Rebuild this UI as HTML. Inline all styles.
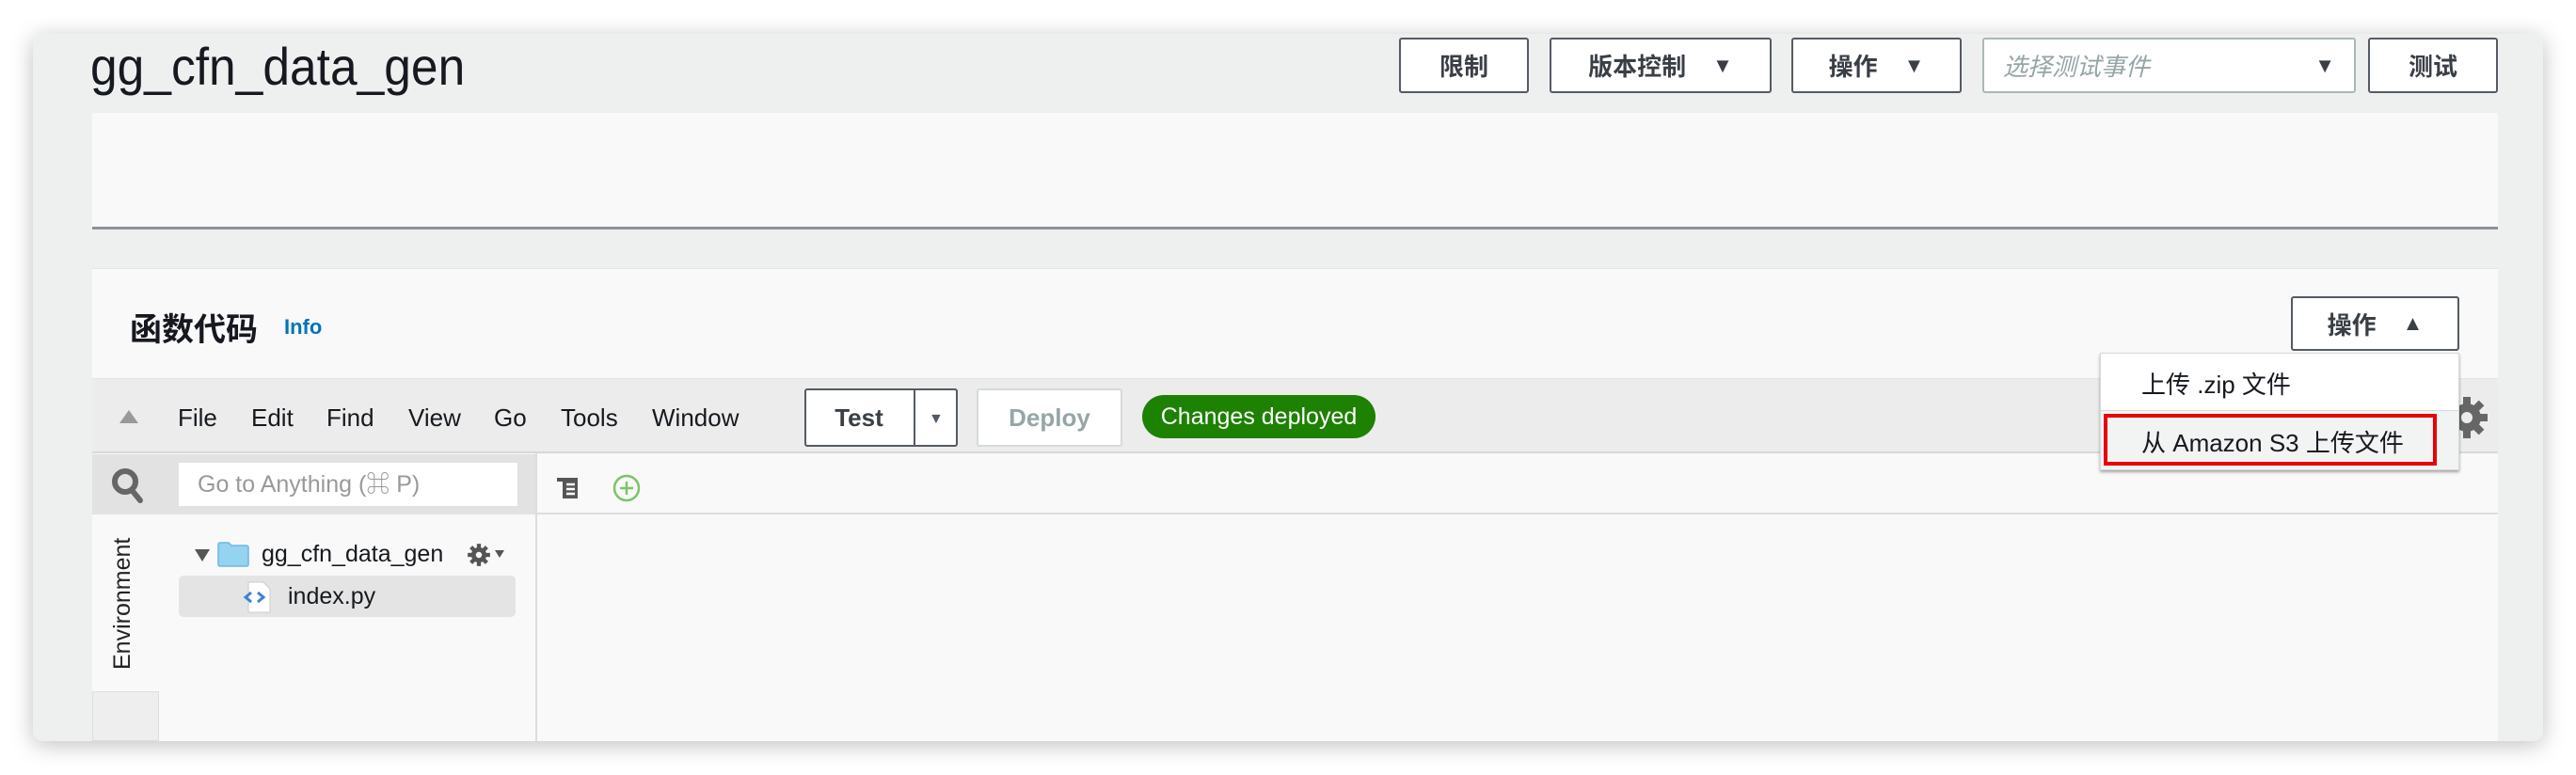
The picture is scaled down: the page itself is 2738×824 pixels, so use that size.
<!DOCTYPE html>
<html><head><meta charset="utf-8"><style>
*{box-sizing:border-box;margin:0;padding:0}
body{width:2738px;height:824px;background:#fff;position:relative;overflow:hidden;font-family:"Liberation Sans","Noto Sans CJK SC",sans-serif;color:#16191f}
.abs{position:absolute}
.win{left:35px;top:36px;width:2668px;height:752px;background:#eef0f0;border-radius:10px;box-shadow:0 4px 24px rgba(0,0,0,.25)}
.btn{position:absolute;top:40px;height:59px;border:2px solid #545b64;border-radius:3px;background:#fff;font-size:26px;font-weight:bold;color:#3a3f46;display:flex;align-items:center;justify-content:center;gap:28px}
.card{background:#f9f9f9;left:98px;width:2557px}
.menu span{position:absolute;top:429px;font-size:26px;color:#16191f}
</style></head><body>
<div class="abs win"></div>
<div class="abs" style="left:96px;top:38px;font-size:56px;color:#16191f;transform:scaleX(0.92);transform-origin:0 0">gg_cfn_data_gen</div>
<div class="btn" style="left:1487px;width:138px">限制</div>
<div class="btn" style="left:1647px;width:236px">版本控制 <span style="font-size:22px">▼</span></div>
<div class="btn" style="left:1904px;width:181px">操作 <span style="font-size:22px">▼</span></div>
<div class="btn" style="left:2107px;width:397px;border-color:#aab7b8;justify-content:space-between;padding:0 20px 0 20px"><span style="font-style:italic;font-weight:normal;color:#95a5a6">选择测试事件</span><span style="font-size:22px;color:#3a3f46">▼</span></div>
<div class="btn" style="left:2517px;width:138px">测试</div>

<div class="abs card" style="top:120px;height:124px;border-bottom:3px solid #8a9199"></div>
<div class="abs card" style="top:285px;height:503px;border-top:1px solid #e4e6e6"></div>
<div class="abs" style="left:138px;top:323px;font-size:34px;font-weight:bold">函数代码</div>
<div class="abs" style="left:302px;top:335px;font-size:22px;font-weight:bold;color:#0073bb">Info</div>
<div class="btn" style="left:2435px;top:315px;width:179px;height:58px">操作 <span style="font-size:22px">▲</span></div>

<div class="abs" style="left:98px;top:402px;width:2557px;height:80px;background:#ececec;border-bottom:2px solid #d8d8d8;border-top:1px solid #e2e2e2"></div>
<div class="abs" style="left:127px;top:436px;width:0;height:0;border-left:10px solid transparent;border-right:10px solid transparent;border-bottom:14px solid #999"></div>
<div class="menu"><span style="left:189px">File</span><span style="left:267px">Edit</span><span style="left:347px">Find</span><span style="left:434px">View</span><span style="left:525px">Go</span><span style="left:596px">Tools</span><span style="left:693px">Window</span></div>
<div class="abs" style="left:855px;top:413px;width:163px;height:62px;border:2px solid #545b64;border-radius:3px;background:#fff"></div>
<div class="abs" style="left:971px;top:413px;width:2px;height:62px;background:#545b64"></div>
<div class="abs" style="left:855px;top:429px;width:116px;text-align:center;font-size:26px;font-weight:bold;color:#3a3f46">Test</div>
<div class="abs" style="left:987px;top:437px;font-size:16px;color:#545b64">▼</div>
<div class="abs" style="left:1038px;top:413px;width:155px;height:62px;border:2px solid #d5dbdb;border-radius:3px;background:#fff;text-align:center;line-height:58px;font-size:26px;font-weight:bold;color:#95a5a6">Deploy</div>
<div class="abs" style="left:1214px;top:420px;width:248px;height:46px;border-radius:23px;background:#1d8102;color:#fff;font-size:25px;text-align:center;line-height:46px">Changes deployed</div>
<svg class="abs" style="left:2600px;top:418px" width="44" height="52" viewBox="0 0 44 52"><g fill="#666"><circle cx="22" cy="26" r="15"/><rect x="18" y="4" width="8" height="44"/><rect x="0" y="22" width="44" height="8"/><rect x="18" y="4" width="8" height="44" transform="rotate(45 22 26)"/><rect x="18" y="4" width="8" height="44" transform="rotate(-45 22 26)"/></g><circle cx="22" cy="26" r="6" fill="#ececec"/></svg>

<div class="abs" style="left:98px;top:483px;width:471px;height:64px;background:#e2e2e2"></div>
<svg class="abs" style="left:118px;top:497px" width="36" height="40" viewBox="0 0 36 40"><circle cx="15" cy="15" r="11" fill="none" stroke="#666" stroke-width="6"/><line x1="22" y1="24" x2="31" y2="35" stroke="#666" stroke-width="6" stroke-linecap="round"/></svg>
<div class="abs" style="left:190px;top:492px;width:360px;height:46px;background:#fff;padding-left:20px;line-height:46px;font-size:25px;color:#999">Go to Anything (⌘ P)</div>
<div class="abs" style="left:569px;top:482px;width:2px;height:306px;background:#ddd"></div>
<div class="abs" style="left:571px;top:545px;width:2084px;height:2px;background:#ddd"></div>
<svg class="abs" style="left:590px;top:506px" width="28" height="26" viewBox="0 0 28 26"><path d="M2 2h22v22H8V6H2z" fill="#555"/><g stroke="#fff" stroke-width="2.5"><line x1="12" y1="9" x2="21" y2="9"/><line x1="12" y1="14" x2="21" y2="14"/><line x1="12" y1="19" x2="21" y2="19"/></g></svg>
<svg class="abs" style="left:650px;top:503px" width="32" height="32" viewBox="0 0 32 32"><circle cx="16" cy="16" r="13" fill="none" stroke="#7cc46a" stroke-width="2.5"/><path d="M16 9v14M9 16h14" stroke="#7cc46a" stroke-width="2.5"/></svg>

<div class="abs" style="left:98px;top:735px;width:71px;height:53px;background:#eee;border:1px solid #ddd"></div>
<div class="abs" style="left:116px;top:712px;transform:rotate(-90deg);transform-origin:0 0;font-size:25px;color:#222;white-space:nowrap">Environment</div>
<div class="abs" style="left:207px;top:584px;width:0;height:0;border-left:8px solid transparent;border-right:8px solid transparent;border-top:13px solid #555"></div>
<svg class="abs" style="left:230px;top:575px" width="36" height="28" viewBox="0 0 36 28"><path d="M2 4a2 2 0 0 1 2-2h9l3 3h16a2 2 0 0 1 2 2v18a2 2 0 0 1-2 2H4a2 2 0 0 1-2-2z" fill="#95d3f1" stroke="#6fb8e0" stroke-width="1.5"/></svg>
<div class="abs" style="left:278px;top:575px;font-size:25px">gg_cfn_data_gen</div>
<svg class="abs" style="left:494px;top:576px" width="30" height="28" viewBox="0 0 44 52"><g fill="#555"><circle cx="22" cy="26" r="15"/><rect x="18" y="4" width="8" height="44"/><rect x="0" y="22" width="44" height="8"/><rect x="18" y="4" width="8" height="44" transform="rotate(45 22 26)"/><rect x="18" y="4" width="8" height="44" transform="rotate(-45 22 26)"/></g><circle cx="22" cy="26" r="6" fill="#f9f9f9"/></svg>
<div class="abs" style="left:526px;top:585px;width:0;height:0;border-left:5px solid transparent;border-right:5px solid transparent;border-top:8px solid #555"></div>
<div class="abs" style="left:190px;top:612px;width:358px;height:44px;background:#e4e4e4;border-radius:5px"></div>
<svg class="abs" style="left:258px;top:618px" width="32" height="34" viewBox="0 0 32 34"><path d="M6 1h16l7 7v25H6z" fill="#fff" stroke="#ccc"/><path d="M9 12l-6 5 6 5M16 12l6 5-6 5" fill="none" stroke="#3b82d6" stroke-width="3"/></svg>
<div class="abs" style="left:306px;top:620px;font-size:25px">index.py</div>

<div class="abs" style="left:2232px;top:375px;width:382px;height:125px;background:#fff;border:1px solid #d5dbdb;box-shadow:0 2px 3px rgba(0,0,0,.35)"></div>
<div class="abs" style="left:2276px;top:389px;font-size:26px">上传 .zip 文件</div>
<div class="abs" style="left:2233px;top:436px;width:380px;height:63px;background:#f2f3f3;border-top:1px solid #d5dbdb"></div>
<div class="abs" style="left:2236px;top:440px;width:354px;height:55px;border:4px solid #e8000a"></div>
<div class="abs" style="left:2276px;top:451px;font-size:26px">从 Amazon S3 上传文件</div>
</body></html>
